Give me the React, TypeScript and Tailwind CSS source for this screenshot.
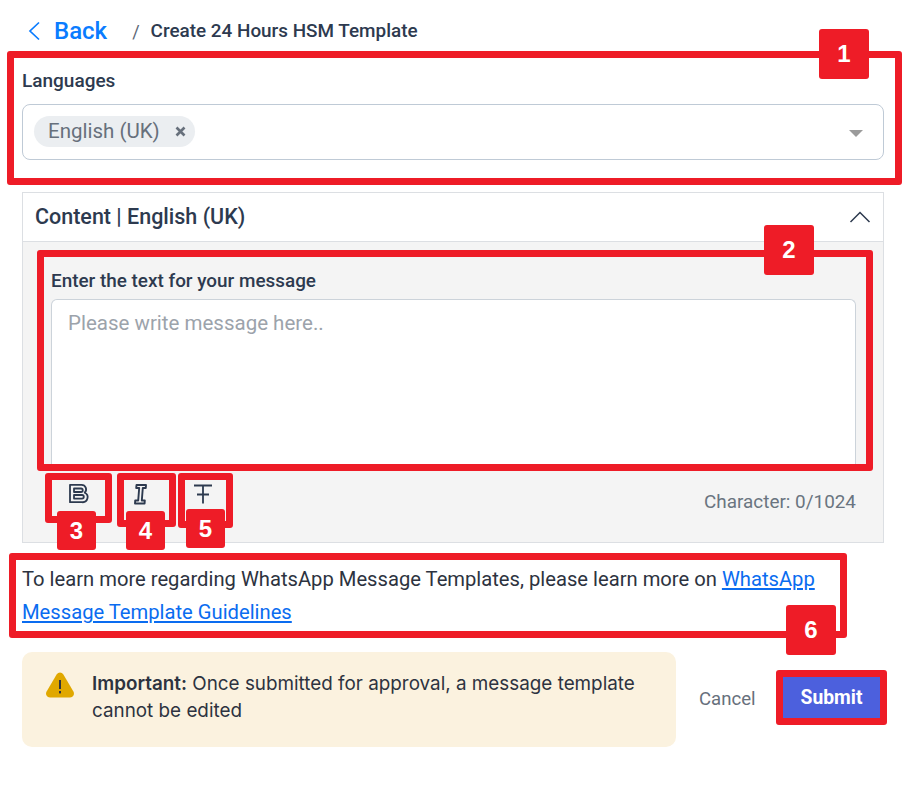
// red callouts drawn over the screenshot
const CALLOUTS = [
  { id: 1, box: "left-[7px] top-[51px] w-[895px] h-[134px]", tag: "left-[819px] top-[29px] w-[50px] h-[50px]" },
  { id: 2, box: "left-[37px] top-[250px] w-[836px] h-[221px]", tag: "left-[764px] top-[225px] w-[50px] h-[50px]" },
  { id: 3, box: "left-[45px] top-[473px] w-[67px] h-[50px]", tag: "left-[57px] top-[511px] w-[39px] h-[39px]" },
  { id: 4, box: "left-[117px] top-[473px] w-[59px] h-[54px]", tag: "left-[126px] top-[511px] w-[39px] h-[39px]" },
  { id: 5, box: "left-[178px] top-[473px] w-[55px] h-[55px]", tag: "left-[186px] top-[509px] w-[39px] h-[39px]" },
  { id: 6, box: "left-[9px] top-[553px] w-[838px] h-[85px]", tag: "left-[786px] top-[605px] w-[50px] h-[50px]" },
];

function BoldIcon() {
  return (
    <svg width="22" height="22" viewBox="0 0 22 22" fill="none" stroke="#2d3a4f" strokeWidth="1.8" strokeLinejoin="round">
      <path d="M2 1.800h11.500a4.600 4.600 0 0 1 3.200 7.900 5 5 0 0 1-2.700 9.500H2z" />
      <path d="M6 5.500h7a1.700 1.700 0 0 1 0 3.500H6zM6 12h8a1.800 1.800 0 0 1 0 3.600H6z" />
    </svg>
  );
}

function ItalicIcon() {
  return (
    <svg width="22" height="22" viewBox="0 0 22 22" fill="none" stroke="#2d3a4f" strokeWidth="1.9" strokeLinejoin="round">
      <path d="M6.500 2H16l-.2 3h-3l-1 12.500h3l-.2 3H5l.2-3h3L9.200 5h-3z" />
    </svg>
  );
}

function StrikeIcon() {
  return (
    <svg width="22" height="22" viewBox="0 0 22 22" fill="none" stroke="#2d3a4f" strokeWidth="1.8">
      <path d="M2 2.500h18M11 2.500v18M5 11.500h12" />
    </svg>
  );
}

function WarnIcon() {
  return (
    <svg width="30" height="28" viewBox="0 0 30 28">
      <path d="M11.600 3.500c1.600-2.700 5.200-2.700 6.800 0l10 17c1.600 2.800-.4 6-3.400 6H5c-3 0-5-3.200-3.400-6z" fill="#e0a800" />
      <rect x="14" y="9" width="2" height="9" fill="#2d3340" />
      <rect x="14" y="20" width="2" height="2.400" fill="#2d3340" />
    </svg>
  );
}

export default function App() {
  return (
    <div className="relative min-h-[805px] bg-white px-[22px] pt-[16px] font-['Roboto',sans-serif] text-[#2d3a4f]">
      {/* breadcrumb */}
      <div className="flex h-[30px] items-center">
        <svg width="14" height="20" viewBox="0 0 14 20" fill="none" stroke="#0a7cff" strokeWidth="1.7" className="ml-[5px]">
          <path d="M12 1.500 3 10l9 8.500" />
        </svg>
        <span className="ml-[13px] text-[24px] font-medium leading-none text-[#0a7cff]">Back</span>
        <span className="ml-[25px] text-[18px] text-[#5c6675]">/</span>
        <span className="ml-[11px] text-[18.900px] font-medium">Create 24 Hours HSM Template</span>
      </div>

      {/* languages */}
      <div className="mt-[23px] text-[19px] font-medium leading-[24px]">Languages</div>
      <div className="mt-[11px] flex h-[56px] w-[862px] items-center rounded-[8px] border border-[#bfcad6] pl-[11px] pr-[20px]">
        <div className="mb-[1px] flex h-[31px] items-center rounded-full bg-[#ebeef1] pl-[14px] pr-[9px] text-[20.500px] text-[#67707c]">
          English (UK)
          <svg width="11" height="11" viewBox="0 0 11 11" stroke="#67707c" strokeWidth="2.600" className="ml-[15px]">
            <path d="M1.500 1.500l8 8M9.500 1.500l-8 8" />
          </svg>
        </div>
        <div className="ml-auto mt-[3px] h-0 w-0 border-x-[7px] border-t-[7px] border-x-transparent border-t-[#9b9b9b]" />
      </div>

      {/* content panel */}
      <div className="mt-[32px] w-[862px] border border-[#dcdfe3]">
        <div className="flex h-[49px] items-center justify-between border-b border-[#dcdfe3] pl-[12px] pr-[12px]">
          <span className="text-[21.500px] font-medium">Content | English (UK)</span>
          <svg width="22" height="12" viewBox="0 0 22 12" fill="none" stroke="#2d3a4f" strokeWidth="1.500">
            <path d="M1.500 11 11 1.500 20.500 11" />
          </svg>
        </div>
        <div className="h-[300px] bg-[#f4f4f4] pl-[28px] pr-[27px]">
          <div className="pt-[27px] text-[18.900px] font-medium leading-[24px]">Enter the text for your message</div>
          <div className="mt-[6px] h-[166px] rounded-t-[6px] border border-b-0 border-[#ccd3da] bg-white px-[16px] pt-[10px] text-[20.500px] leading-[26px] text-[#9ca3ab]">
            Please write message here..
          </div>
          <div className="flex items-start justify-between">
            <div className="ml-[17px] mt-[18px] flex items-center gap-[40px]">
              <BoldIcon />
              <ItalicIcon />
              <StrikeIcon />
            </div>
            <span className="mt-[25px] text-[18.900px] leading-[24px] text-[#6a7480]">Character: 0/1024</span>
          </div>
        </div>
      </div>

      {/* guidelines */}
      <p className="mt-[20px] w-[830px] text-[20.200px] leading-[33px] text-[#2d3340]">
        To learn more regarding WhatsApp Message Templates, please learn more on{" "}
        <a href="#guidelines" className="text-[#0a6cf0] underline">
          WhatsApp Message Template Guidelines
        </a>
      </p>

      {/* footer row */}
      <div className="mt-[23px] flex w-[858px] items-start">
        <div className="flex h-[95px] w-[654px] gap-[17px] rounded-[10px] bg-[#fbf2df] pl-[23px] pr-[20px] pt-[18px] font-['Inter',sans-serif] text-[18.850px] leading-[27px] text-[#2d3340]">
          <div className="mt-[1px] shrink-0">
            <WarnIcon />
          </div>
          <p>
            <span className="font-semibold">Important:</span> Once submitted for approval, a message template cannot be edited
          </p>
        </div>
        <span className="ml-[23px] mt-[34px] text-[18.600px] leading-[26px] text-[#67707c]">Cancel</span>
        <button className="ml-auto mt-[25px] h-[42px] w-[97px] bg-[#4c60dd] pt-[1px] text-[19.300px] font-bold text-white">Submit</button>
      </div>

      {/* annotation layer */}
      {CALLOUTS.map((c) => (
        <div key={c.id}>
          <div className={`absolute ${c.box} rounded-[3px] border-[7px] border-[#ee1c27]`} />
          <div className={`absolute ${c.tag} flex items-center justify-center rounded-[3px] bg-[#ee1c27] font-['Liberation_Sans',sans-serif] text-[24px] font-bold text-white`}>
            {c.id}
          </div>
        </div>
      ))}
      <div className="absolute left-[776px] top-[670px] h-[55px] w-[111px] rounded-[3px] border-[7px] border-[#ee1c27]" />
    </div>
  );
}
